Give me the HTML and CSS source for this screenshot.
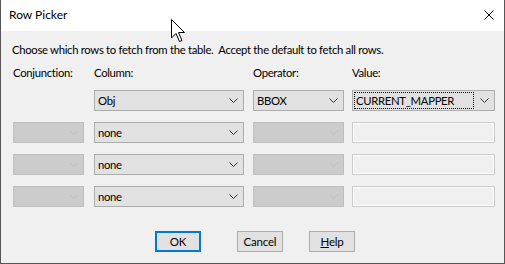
FILE: index.html
```html
<!DOCTYPE html>
<html lang="en">
<head>
  <meta charset="UTF-8">
  <title>Row Picker</title>
  <link rel="stylesheet" href="styles.css">
</head>
<body>
<div class="window">
  <div class="titlebar">
    <span class="title">Row Picker</span>
    <svg class="close" width="10" height="10" viewBox="0 0 10 10">
      <path d="M0.5 0.5 L9.5 9.5 M9.5 0.5 L0.5 9.5" stroke="#000" stroke-width="1"/>
    </svg>
  </div>

  <div class="content">
    <p class="intro">Choose which rows to fetch from the table.&nbsp; Accept the default to fetch all rows.</p>

    <div class="grid">
      <div class="label">Conjunction:</div>
      <div class="label">Column:</div>
      <div class="label">Operator:</div>
      <div class="label">Value:</div>

      <!-- first row: no conjunction -->
      <div></div>
      <div class="combo w-col"><span>Obj</span><svg width="9" height="5"><path d="M0.5 0.5 L4.5 4.5 L8.5 0.5" fill="none" stroke="#333"/></svg></div>
      <div class="combo w-op"><span>BBOX</span><svg width="9" height="5"><path d="M0.5 0.5 L4.5 4.5 L8.5 0.5" fill="none" stroke="#333"/></svg></div>
      <div class="combo focused w-val"><span class="focus">CURRENT_MAPPER</span><svg width="9" height="5"><path d="M0.5 0.5 L4.5 4.5 L8.5 0.5" fill="none" stroke="#333"/></svg></div>

      <div class="combo disabled w-conj"><span></span><svg width="9" height="5"><path d="M0.5 0.5 L4.5 4.5 L8.5 0.5" fill="none" stroke="#bfbfbf"/></svg></div>
      <div class="combo w-col"><span>none</span><svg width="9" height="5"><path d="M0.5 0.5 L4.5 4.5 L8.5 0.5" fill="none" stroke="#333"/></svg></div>
      <div class="combo disabled w-op"><span></span><svg width="9" height="5"><path d="M0.5 0.5 L4.5 4.5 L8.5 0.5" fill="none" stroke="#bfbfbf"/></svg></div>
      <div class="textbox w-val"></div>

      <div class="combo disabled w-conj"><span></span><svg width="9" height="5"><path d="M0.5 0.5 L4.5 4.5 L8.5 0.5" fill="none" stroke="#bfbfbf"/></svg></div>
      <div class="combo w-col"><span>none</span><svg width="9" height="5"><path d="M0.5 0.5 L4.5 4.5 L8.5 0.5" fill="none" stroke="#333"/></svg></div>
      <div class="combo disabled w-op"><span></span><svg width="9" height="5"><path d="M0.5 0.5 L4.5 4.5 L8.5 0.5" fill="none" stroke="#bfbfbf"/></svg></div>
      <div class="textbox w-val"></div>

      <div class="combo disabled w-conj"><span></span><svg width="9" height="5"><path d="M0.5 0.5 L4.5 4.5 L8.5 0.5" fill="none" stroke="#bfbfbf"/></svg></div>
      <div class="combo w-col"><span>none</span><svg width="9" height="5"><path d="M0.5 0.5 L4.5 4.5 L8.5 0.5" fill="none" stroke="#333"/></svg></div>
      <div class="combo disabled w-op"><span></span><svg width="9" height="5"><path d="M0.5 0.5 L4.5 4.5 L8.5 0.5" fill="none" stroke="#bfbfbf"/></svg></div>
      <div class="textbox w-val"></div>
    </div>

    <div class="buttons">
      <button class="btn default">OK</button>
      <button class="btn cancel">Cancel</button>
      <button class="btn help"><u>H</u>elp</button>
    </div>
  </div>

  <!-- mouse pointer over the title bar -->
  <svg class="cursor" width="14" height="24" viewBox="0 0 14 24">
    <path d="M0.5 0.5 L0.5 19 L5 14.5 L8.5 22.5 L11 21.5 L7.5 13.5 L13.5 13.5 Z" fill="#fff" stroke="#000" stroke-width="1"/>
  </svg>
</div>
</body>
</html>
```

FILE: styles.css
```css
html, body {
  margin: 0;
  padding: 0;
}

body {
  font-family: "Segoe UI", Lato, sans-serif;
  font-size: 11.3px;
  letter-spacing: -0.3px;
  color: #000;
  background-color: #f0f0f0;
}

.window {
  position: relative;
  width: 505px;
  height: 264px;
  box-sizing: border-box;
  border: 1px solid #555;
  border-top: none;
  background-color: #f0f0f0;
  overflow: hidden;
}

.titlebar {
  height: 31px;
  background-color: #fff;
  display: flex;
  align-items: center;
  justify-content: space-between;
  padding: 0 10px 0 8px;
}

.title {
  font-size: 12px;
  line-height: 16px;
  margin-top: -1px;
  letter-spacing: 0;
}

.close {
  display: block;
  margin-top: -2px;
}

.content {
  padding: 0 0 0 11px;
}

.intro {
  margin: 11px 0 0;
  line-height: 16px;
}

.grid {
  display: grid;
  grid-template-columns: 81px 159px 99px 143px;
  grid-auto-rows: 21px;
  row-gap: 11px;
  margin-top: 0;
  padding-left: 1px;
}

.grid .label {
  line-height: 16px;
  align-self: start;
  margin-top: 7px;
}

.combo {
  box-sizing: border-box;
  height: 21px;
  border: 1px solid #adadad;
  background-color: #e1e1e1;
  display: flex;
  align-items: center;
  justify-content: space-between;
  padding: 0 5px 0 3px;
}

.combo span {
  line-height: 15px;
}

.combo svg {
  display: block;
  flex: none;
}

.combo.disabled {
  border-color: #bfbfbf;
  background-color: #cccccc;
}

.combo.focused {
  padding-left: 1px;
}

.focus {
  flex: 1;
  box-sizing: border-box;
  height: 17px;
  line-height: 15px;
  border: 1px dotted #000;
  padding-left: 1px;
  margin-right: 6px;
}

.textbox {
  box-sizing: border-box;
  height: 21px;
  border: 1px solid #cccccc;
  background-color: #f0f0f0;
  box-shadow: inset 0 0 0 1px #fbfbfb;
}

.w-conj { width: 71px; }
.w-col { width: 150px; }
.w-op { width: 91px; }
.w-val { width: 143px; }

.buttons {
  display: flex;
  margin-top: 24px;
}

.btn {
  box-sizing: border-box;
  width: 46px;
  height: 21px;
  padding: 0;
  font-family: inherit;
  font-size: 11.5px;
  letter-spacing: -0.2px;
  color: #000;
  background-color: #e1e1e1;
  border: 1px solid #adadad;
}

.btn.default {
  margin-left: 143px;
  border: 2px solid #0078d7;
}

.btn.cancel {
  margin-left: 36px;
}

.btn.help {
  margin-left: 26px;
}

.cursor {
  position: absolute;
  left: 170px;
  top: 19px;
}
```
